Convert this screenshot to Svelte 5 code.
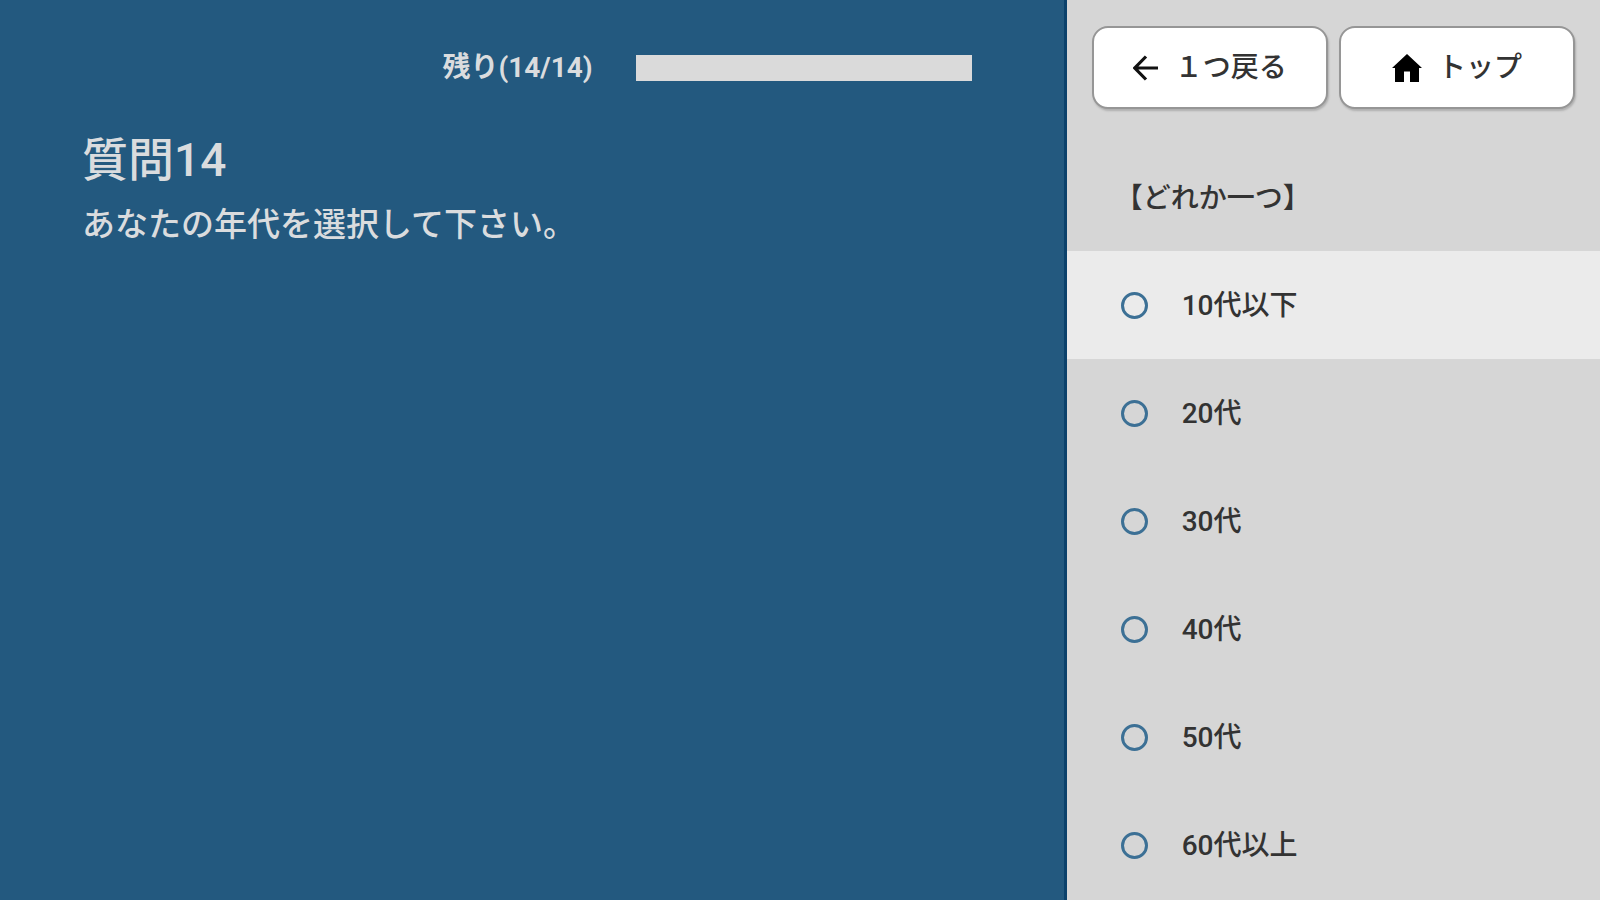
<script>
  const options = ['10代以下', '20代', '30代', '40代', '50代', '60代以上'];
  let selected = $state('');
</script>

<div class="survey">
  <main class="question">
    <div class="progress">
      <label for="remaining">残り(14/14)</label>
      <progress id="remaining" value="14" max="14"></progress>
    </div>
    <h1>質問14</h1>
    <p>あなたの年代を選択して下さい。</p>
  </main>

  <aside class="answers">
    <nav>
      <button type="button">
        <svg class="arrow" viewBox="0 0 26 26" aria-hidden="true">
          <path d="M25 13H2M13 1.5L1.8 13L13 24.5" fill="none" stroke="#111" stroke-width="3.2" />
        </svg>
        <span>１つ戻る</span>
      </button>
      <button type="button">
        <svg class="home" viewBox="0 0 30 30" aria-hidden="true">
          <path d="M15 1L0 15H3V29H12V18.5H18V29H27V15H30Z" fill="#000" />
        </svg>
        <span>トップ</span>
      </button>
    </nav>
    <fieldset>
      <legend>【どれか一つ】</legend>
      {#each options as option, i}
        <label class="option" class:highlight={i === 0}>
          <input type="radio" name="age" value={option} bind:group={selected} />
          <span>{option}</span>
        </label>
      {/each}
    </fieldset>
  </aside>
</div>

<style>
  :global(body) {
    margin: 0;
    background: #d6d6d6;
  }
  .survey {
    display: grid;
    grid-template-columns: 2fr 1fr;
    height: 100vh;
    overflow: hidden;
    font-family: Roboto, 'Noto Sans CJK JP', sans-serif;
    font-size: 28px;
    font-weight: 500;
    line-height: 40px;
    color: #333;
  }
  .question {
    box-sizing: border-box;
    padding: 48px 92px 48px 82px;
    background: #23597f;
    border-right: 3px solid #0b416b;
    color: #dadcde;
  }
  .progress {
    display: flex;
    justify-content: flex-end;
    align-items: center;
    gap: 43px;
    font-weight: 700;
  }
  progress {
    appearance: none;
    display: block;
    width: 336px;
    height: 26px;
    border: 0;
    background: #dadada;
  }
  progress::-webkit-progress-bar,
  progress::-webkit-progress-value {
    background: #dadada;
  }
  h1 {
    margin: 40px 0 0;
    font-size: 46px;
    font-weight: 500;
    line-height: 64px;
  }
  p {
    margin: 9px 0 0;
    font-size: 33px;
    line-height: 48px;
  }
  .answers {
    background: #d6d6d6;
  }
  nav {
    display: grid;
    grid-template-columns: 1fr 1fr;
    gap: 11px;
    padding: 26px 25px 0;
  }
  button {
    display: flex;
    justify-content: center;
    align-items: center;
    gap: 16px;
    height: 83px;
    padding: 0;
    border: 2px solid #969696;
    border-radius: 16px;
    background: #fff;
    box-shadow: 1px 2px 2px #b0b0b0;
    color: #333;
    font: inherit;
  }
  .arrow {
    width: 26px;
    height: 26px;
  }
  .home {
    width: 30px;
    height: 30px;
  }
  fieldset {
    min-width: 0;
    margin: 0;
    padding: 0;
    border: 0;
  }
  legend {
    box-sizing: border-box;
    width: 100%;
    padding: 70px 48px 32px;
  }
  .option {
    box-sizing: border-box;
    display: flex;
    align-items: center;
    gap: 34px;
    height: 108px;
    padding: 1px 0 0 54px;
  }
  .highlight {
    background: #ebebeb;
  }
  input {
    appearance: none;
    box-sizing: border-box;
    width: 27px;
    height: 27px;
    margin: 0;
    border: 3px solid #3c7095;
    border-radius: 50%;
  }
  input:checked {
    background: radial-gradient(#3c7095 45%, transparent 50%);
  }
</style>
